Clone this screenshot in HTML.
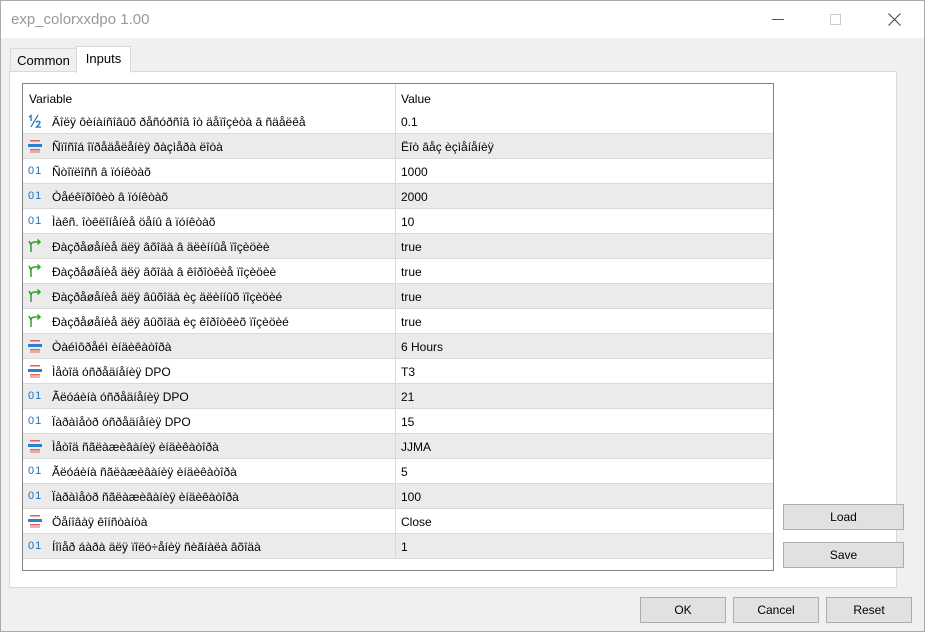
<!DOCTYPE html>
<html><head><meta charset="utf-8"><style>
*{margin:0;padding:0;box-sizing:border-box}
body{width:925px;height:632px;background:#f0f0f0;font-family:"Liberation Sans","DejaVu Sans",sans-serif;font-size:12px;color:#000;position:relative;overflow:hidden}
.abs{position:absolute}
#title{left:0;top:0;width:925px;height:38px;background:#fff;border:1px solid #aaa;border-bottom:none}
#title span{position:absolute;left:10px;top:10px;font-size:15px;color:#999}
.btn{position:absolute;background:#e1e1e1;border:1px solid #adadad;text-align:center;line-height:25px;font-size:12px}
#panel{left:9px;top:71px;width:888px;height:517px;background:#fff;border:1px solid #d9d9d9}
#grid{left:22px;top:83px;width:752px;height:488px;background:#fff;border:1px solid #828282}
.row{position:absolute;left:0;width:750px;height:25px;border-bottom:1px solid #d9d9d9}
.row.g{background:#ebebeb}
.row .n{position:absolute;left:29px;top:6px;white-space:nowrap}
.row .v{position:absolute;left:378px;top:6px;white-space:nowrap}
.row .sep{position:absolute;left:372px;top:0;width:1px;height:25px;background:#d9d9d9}
.ic{position:absolute;left:4px;top:5px;width:16px;height:14px}
.o1{position:absolute;left:5px;top:6px;font-size:11px;color:#1f6fb5;letter-spacing:1px}
</style></head><body>
<div id="title" class="abs"><span>exp_colorxxdpo 1.00</span>
<div class="abs" style="left:771px;top:18px;width:12px;height:1px;background:#555"></div>
<div class="abs" style="left:829px;top:13px;width:11px;height:11px;border:1px solid #ccc"></div>
<svg class="abs" style="left:887px;top:12px" width="13" height="13"><path d="M0.5 0.5L12.5 12.5M12.5 0.5L0.5 12.5" stroke="#444" stroke-width="1"/></svg>
</div>
<div class="abs" style="left:10px;top:48px;width:67px;height:24px;background:#f0f0f0;border:1px solid #d9d9d9;border-bottom:none;font-size:13px;line-height:24px;text-align:center">Common</div>
<div id="panel" class="abs"></div>
<div class="abs" style="left:76px;top:46px;width:55px;height:27px;background:#fff;border:1px solid #d9d9d9;border-bottom:none;font-size:13px;line-height:24px;text-align:center">Inputs</div>
<div id="grid" class="abs">
<div class="row" style="top:0;border-bottom:none"><span class="n" style="left:6px;top:8px">Variable</span><span class="v" style="top:8px">Value</span><div class="sep"></div></div>
<div id="rows"></div>
</div>
<script>
var R=[
["h","Äîëÿ ôèíàíñîâûõ ðåñóðñîâ îò äåïîçèòà â ñäåëêå","0.1"],
["e","Ñïîñîá îïðåäåëåíèÿ ðàçìåðà ëîòà","Ëîò âåç èçìåíåíèÿ"],
["o","Ñòîïëîññ â ïóíêòàõ","1000"],
["o","Òåéêïðîôèò â ïóíêòàõ","2000"],
["o","Ìàêñ. îòêëîíåíèå öåíû â ïóíêòàõ","10"],
["b","Ðàçðåøåíèå äëÿ âõîäà â äëèííûå ïîçèöèè","true"],
["b","Ðàçðåøåíèå äëÿ âõîäà â êîðîòêèå ïîçèöèè","true"],
["b","Ðàçðåøåíèå äëÿ âûõîäà èç äëèííûõ ïîçèöèé","true"],
["b","Ðàçðåøåíèå äëÿ âûõîäà èç êîðîòêèõ ïîçèöèé","true"],
["e","Òàéìôðåéì èíäèêàòîðà","6 Hours"],
["e","Ìåòîä óñðåäíåíèÿ DPO","T3"],
["o","Ãëóáèíà  óñðåäíåíèÿ DPO","21"],
["o","Ïàðàìåòð óñðåäíåíèÿ DPO","15"],
["e","Ìåòîä ñãëàæèâàíèÿ èíäèêàòîðà","JJMA"],
["o","Ãëóáèíà ñãëàæèâàíèÿ èíäèêàòîðà","5"],
["o","Ïàðàìåòð ñãëàæèâàíèÿ èíäèêàòîðà","100"],
["e","Öåíîâàÿ êîíñòàíòà","Close"],
["o","Íîìåð áàðà äëÿ ïîëó÷åíèÿ ñèãíàëà âõîäà","1"]];
var ic={
h:'<svg class="ic" viewBox="0 0 16 14"><path d="M2 3L4 1.5V7" stroke="#1f6fb5" stroke-width="1.3" fill="none"/><path d="M11 1L4 13" stroke="#1f6fb5" stroke-width="1.2"/><path d="M9 8.5Q11 6.5 13 8Q13 10 9.5 13H14" stroke="#1f6fb5" stroke-width="1.3" fill="none"/></svg>',
e:'<svg class="ic" viewBox="0 0 16 14"><rect x="3" y="1" width="10" height="1.5" fill="#e06060"/><rect x="1" y="5" width="14" height="3" fill="#2f7fd0"/><rect x="3" y="10" width="10" height="1.5" fill="#e06060"/><rect x="3" y="12.5" width="10" height="1" fill="#e06060"/></svg>',
b:'<svg class="ic" viewBox="0 0 16 14"><path d="M4 13V6Q4 3 8 3H13M10.5 0.5L13 3L10.5 5.5M4 6L2 2" stroke="#2ca02c" stroke-width="1.5" fill="none"/></svg>'};
var h='';
R.forEach(function(r,i){
 var icon=r[0]=='o'?'<span class="o1">01</span>':ic[r[0]];
 h+='<div class="row'+(i%2?' g':'')+'" style="top:'+(25+i*25)+'px">'+icon+'<span class="n">'+r[1]+'</span><div class="sep"></div><span class="v">'+r[2]+'</span></div>';
});
document.getElementById('rows').innerHTML=h;
</script>
<div class="btn" style="left:783px;top:504px;width:121px;height:26px">Load</div>
<div class="btn" style="left:783px;top:542px;width:121px;height:26px">Save</div>
<div class="btn" style="left:640px;top:597px;width:86px;height:26px">OK</div>
<div class="btn" style="left:733px;top:597px;width:86px;height:26px">Cancel</div>
<div class="btn" style="left:826px;top:597px;width:86px;height:26px">Reset</div>
<div class="abs" style="left:924px;top:0;width:1px;height:632px;background:#aaa"></div>
<div class="abs" style="left:0;top:631px;width:925px;height:1px;background:#aaa"></div>
<div class="abs" style="left:0;top:0;width:1px;height:632px;background:#aaa"></div>
</body></html>
